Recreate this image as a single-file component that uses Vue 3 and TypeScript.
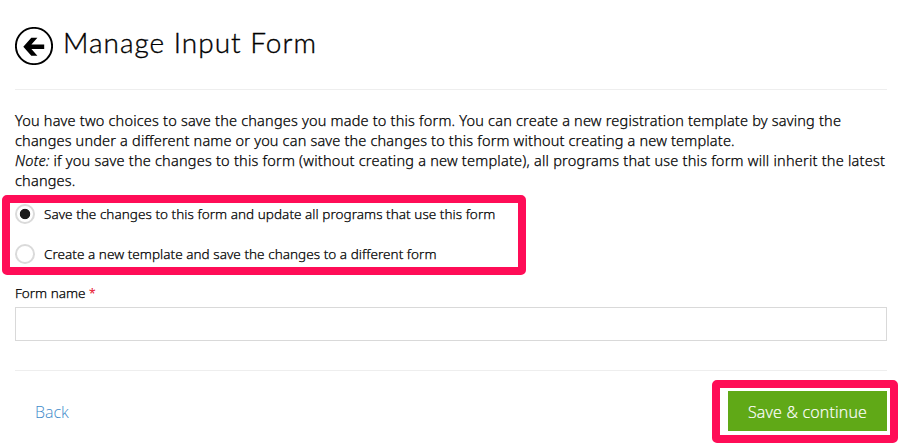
<script setup lang="ts">
import { ref } from 'vue'

type SaveMode = 'update' | 'create'

const mode = ref<SaveMode>('update')
const formName = ref('')

const options: { value: SaveMode; label: string }[] = [
  { value: 'update', label: 'Save the changes to this form and update all programs that use this form' },
  { value: 'create', label: 'Create a new template and save the changes to a different form' },
]
</script>

<template>
  <main class="page">
    <header class="header">
      <button class="back-icon" type="button" aria-label="Go back">
        <svg width="38" height="38" viewBox="0 0 38 38">
          <circle cx="19" cy="19" r="18.1" fill="none" stroke="#000" stroke-width="1.9" />
          <path d="M8.3 19.8 L16.3 10.8 H22.4 L16.4 17.5 H29.2 V22 H16.4 L22.4 28.8 H16.3 Z" fill="#000" />
        </svg>
      </button>
      <h1 class="title">Manage Input Form</h1>
    </header>

    <p class="intro">
      <span class="line l1">You have two choices to save the changes you made to this form. You can create a new registration template by saving the</span>
      <span class="line l2">changes under a different name or you can save the changes to this form without creating a new template.</span>
      <span class="line l3"><em>Note:</em> if you save the changes to this form (without creating a new template), all programs that use this form will inherit the latest</span>
      <span class="line">changes.</span>
    </p>

    <div class="options">
      <label v-for="option in options" :key="option.value" class="option">
        <input v-model="mode" class="radio" type="radio" name="mode" :value="option.value" />
        <span class="option-text">{{ option.label }}</span>
      </label>
    </div>

    <div class="field">
      <label class="field-label" for="form-name">Form name <span class="required">*</span></label>
      <input id="form-name" v-model="formName" class="text-input" type="text" />
    </div>

    <footer class="footer">
      <a class="back-link" href="#">Back</a>
      <div class="highlight">
        <button class="save" type="button">Save &amp; continue</button>
      </div>
    </footer>
  </main>
</template>

<style>
body {
  background: #fff;
}
</style>

<style scoped>
.page {
  box-sizing: border-box;
  width: 902px;
  height: 447px;
  padding: 0 15px;
  overflow: hidden;
  color: #000;
  font-family: 'Noto Sans', 'Open Sans', sans-serif;
  font-size: 14.5px;
  font-weight: 300;
}

.header {
  box-sizing: border-box;
  display: flex;
  align-items: flex-start;
  gap: 10px;
  height: 90px;
  padding-top: 27px;
  border-bottom: 1px solid #eee;
}

.back-icon {
  width: 38px;
  height: 38px;
  padding: 0;
  border: 0;
  background: none;
}

.back-icon svg {
  display: block;
}

.title {
  margin: -2px 0 0;
  font: 300 28px/34px Lato, sans-serif;
  letter-spacing: 1px;
  -webkit-text-stroke: 0.35px #000;
  white-space: nowrap;
}

.intro {
  margin: 20px 0 5px;
  line-height: 20px;
  letter-spacing: 0.19px;
  -webkit-text-stroke: 0.25px #000;
}

.line {
  display: block;
  white-space: nowrap;
}

.l1 {
  letter-spacing: 0.198px;
}

.l2 {
  letter-spacing: 0.175px;
}

.l3 {
  letter-spacing: 0.222px;
}

.options {
  box-sizing: border-box;
  display: flex;
  flex-direction: column;
  gap: 20px;
  width: 524px;
  height: 80px;
  margin-left: -13px;
  padding: 1px 5px;
  border: 8px solid #ff0d57;
  border-radius: 5px;
}

.option {
  display: flex;
  align-items: center;
  gap: 9px;
  height: 20px;
}

.radio {
  box-sizing: border-box;
  flex: none;
  width: 20px;
  height: 20px;
  margin: 0;
  appearance: none;
  border: 2px solid #dadada;
  border-radius: 50%;
  background: #fff;
}

.radio:checked {
  background: radial-gradient(circle, #1d1d1d 4.8px, #fff 5.6px);
}

.option-text {
  font-size: 13.5px;
  line-height: 20px;
  letter-spacing: 0.045px;
  -webkit-text-stroke: 0.25px #000;
  white-space: nowrap;
}

.field {
  padding-top: 8px;
}

.field-label {
  display: block;
  font-size: 13.5px;
  line-height: 20px;
  -webkit-text-stroke: 0.25px;
}

.required {
  color: #e8112d;
  font-size: 12px;
  line-height: 1;
}

.text-input {
  box-sizing: border-box;
  display: block;
  width: 872px;
  height: 34px;
  margin-top: 4px;
  padding: 5px 10px;
  border: 1px solid #d9d9d9;
  border-radius: 0;
  outline: 0;
  background: #fff;
  font: inherit;
}

.footer {
  display: flex;
  justify-content: space-between;
  align-items: flex-start;
  margin-top: 29px;
  padding: 9px 0 0 20px;
  border-top: 1px solid #eee;
}

.back-link {
  margin-top: 20px;
  color: #428bca;
  font: 300 16px/24px 'Open Sans', sans-serif;
  text-decoration: none;
}

.highlight {
  box-sizing: border-box;
  width: 186px;
  height: 63px;
  margin-right: -11px;
  padding: 3px 3px 4px 8px;
  border: 8px solid #ff0d57;
  border-radius: 5px;
}

.save {
  display: block;
  width: 159px;
  height: 40px;
  padding: 2px 0 0;
  border: 0;
  background: #60a917;
  color: #fff;
  font: 300 16px/38px 'Open Sans', sans-serif;
  letter-spacing: 0.2px;
  -webkit-text-stroke: 0.2px #fff;
}
</style>
